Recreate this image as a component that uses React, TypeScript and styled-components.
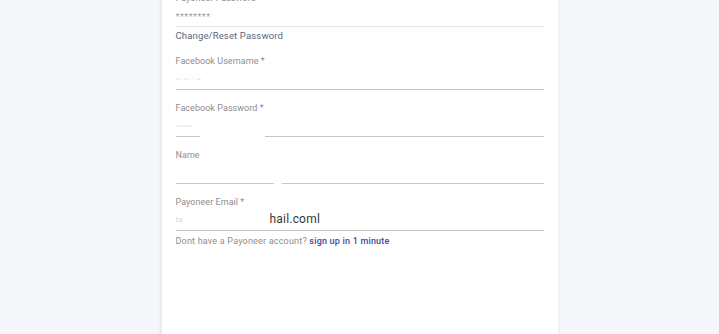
import React from "react";
import styled, { createGlobalStyle } from "styled-components";

const Global = createGlobalStyle`
  html, body { margin: 0; padding: 0; }
  body {
    background: #f6f7fb;
    font-family: Roboto, "Noto Sans", "Liberation Sans", sans-serif;
    overflow: hidden;
  }
`;

const Page = styled.div`
  width: 719px;
  height: 334px;
  display: flex;
  justify-content: center;
  overflow: hidden;
`;

const Card = styled.div`
  width: 396px;
  margin-top: -24px;
  min-height: 420px;
  box-sizing: border-box;
  padding: 16px 14px;
  background: #ffffff;
  box-shadow: 0 0 4px rgba(0, 0, 0, 0.07), -2px 0 4px rgba(0, 0, 0, 0.03);
  display: flex;
  flex-direction: column;
`;

const Field = styled.div<{ $mb?: number }>`
  display: flex;
  flex-direction: column;
  margin-bottom: ${(p) => (p.$mb ?? 12)}px;
`;

const Label = styled.div`
  font-size: 9px;
  line-height: 12px;
  height: 12px;
  color: #8e8e8e;
  letter-spacing: 0.05px;
  white-space: nowrap;
`;

const Value = styled.div<{ $muted?: boolean }>`
  height: 22px;
  display: flex;
  align-items: center;
  padding-top: ${(p) => (p.$muted ? 3 : 0)}px;
  box-sizing: border-box;
  font-size: ${(p) => (p.$muted ? 9 : 12)}px;
  color: ${(p) => (p.$muted ? "#a0a0a0" : "#3a3a3a")};
  letter-spacing: ${(p) => (p.$muted ? "0.5px" : "0.2px")};
  white-space: nowrap;
`;

const Faint = styled.span<{ $w: number }>`
  display: inline-block;
  width: ${(p) => p.$w}px;
  color: #d9d9d9;
  font-size: 8px;
  overflow: hidden;
`;

const Underline = styled.div<{ $gapFrom?: number; $gapTo?: number; $dotted?: boolean }>`
  height: 1px;
  background: ${(p) =>
    p.$dotted
      ? "#e6e6e6"
      : p.$gapFrom !== undefined
      ? `linear-gradient(to right, #c6c6c6 0px, #c6c6c6 ${p.$gapFrom}px, transparent ${p.$gapFrom}px, transparent ${p.$gapTo}px, #c6c6c6 ${p.$gapTo}px)`
      : "#c6c6c6"};
`;

const ActionLink = styled.div`
  font-size: 9.5px;
  line-height: 14px;
  margin-top: 2px;
  margin-bottom: 12px;
  color: #5a667c;
  letter-spacing: 0.15px;
`;

const Helper = styled.div`
  margin-top: 4px;
  font-size: 9px;
  line-height: 12px;
  color: #8e8e8e;
  letter-spacing: 0.2px;
  white-space: nowrap;
`;

const SignUp = styled.span`
  color: #434c98;
  font-weight: 500;
`;

export default function App() {
  return (
    <>
      <Global />
      <Page>
        <Card>
          <Field $mb={0}>
            <Label>Payoneer Password *</Label>
            <Value $muted>********</Value>
            <Underline $dotted />
          </Field>
          <ActionLink>Change/Reset Password</ActionLink>

          <Field>
            <Label>Facebook Username *</Label>
            <Value>
              <Faint $w={80}>~ ~ - ~</Faint>
            </Value>
            <Underline />
          </Field>

          <Field>
            <Label>Facebook Password *</Label>
            <Value>
              <Faint $w={40}>~~~</Faint>
            </Value>
            <Underline $gapFrom={24} $gapTo={89} />
          </Field>

          <Field>
            <Label>Name</Label>
            <Value />
            <Underline $gapFrom={98} $gapTo={106} />
          </Field>

          <Field $mb={0}>
            <Label>Payoneer Email *</Label>
            <Value>
              <Faint $w={94}>ta</Faint>
              hail.coml
            </Value>
            <Underline />
          </Field>
          <Helper>
            Dont have a Payoneer account? <SignUp>sign up in 1 minute</SignUp>
          </Helper>
        </Card>
      </Page>
    </>
  );
}
